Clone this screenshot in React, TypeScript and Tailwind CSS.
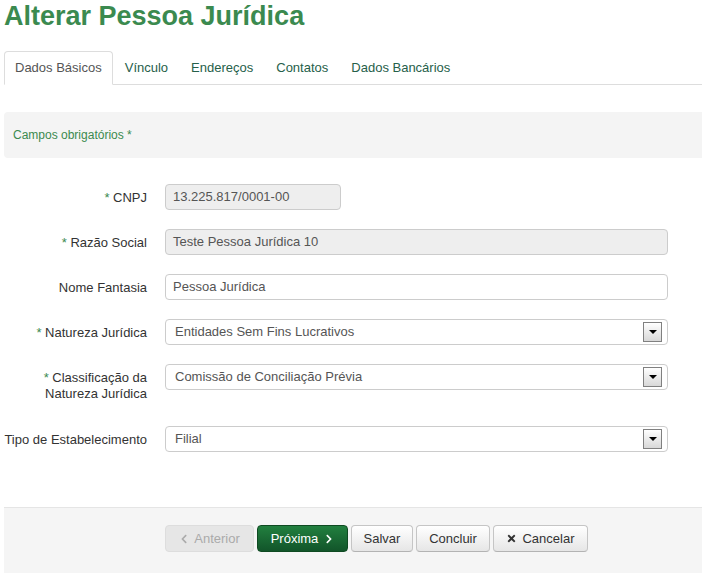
import { FaChevronLeft, FaChevronRight, FaTimes } from 'react-icons/fa';

const tabs = ['Dados Básicos', 'Vínculo', 'Endereços', 'Contatos', 'Dados Bancários'];

function Req() {
  return <span className="text-[#3b8a4f]">* </span>;
}

function SelectBox({ value }: { value: string }) {
  return (
    <div className="relative w-[503px] h-[26px] border border-[#ccc] rounded-[4px] bg-white flex items-center pl-[9px] text-[13px] text-[#555]">
      {value}
      <div className="absolute right-[5px] top-[2px] w-[19px] h-[20px] border border-[#808080] bg-gradient-to-b from-white to-[#d8d8d8] flex items-center justify-center">
        <div className="w-0 h-0 border-l-[4px] border-r-[4px] border-t-[4px] border-l-transparent border-r-transparent border-t-black" />
      </div>
    </div>
  );
}

function Row({ label, children, className = '' }: { label: React.ReactNode; children: React.ReactNode; className?: string }) {
  return (
    <div className={`flex items-start ${className}`}>
      <label className="w-[143px] shrink-0 text-right pt-[6px] leading-4 text-[13px] text-[#333]">{label}</label>
      <div className="ml-[18px]">{children}</div>
    </div>
  );
}

export default function App() {
  return (
    <div className="w-[702px] h-[573px] overflow-hidden bg-white pl-[4px] [font-family:'Liberation_Sans',Arial,sans-serif]">
      <h1 className="mt-[1px] leading-[30px] text-[27px] font-bold text-[#3b8a4f]">Alterar Pessoa Jurídica</h1>

      <div className="mt-[20px] flex border-b border-[#ddd] h-[34px]">
        {tabs.map((t, i) => (
          <div
            key={t}
            className={`h-[34px] px-[10px] mr-[1px] flex items-center text-[13px] rounded-t-[4px] border ${
              i === 0 ? 'bg-white border-[#ddd] border-b-white text-[#555]' : 'border-transparent text-[#26604a]'
            }`}
          >
            {t}
          </div>
        ))}
      </div>

      <div className="mt-[27px] h-[46px] bg-[#f4f4f4] rounded-l-[4px] flex items-center pl-[9px] text-[12px] text-[#3b8a4f]">
        Campos obrigatórios *
      </div>

      <div className="mt-[26px]">
        <Row label={<><Req />CNPJ</>} className="mb-[19px]">
          <div className="w-[176px] h-[26px] border border-[#ccc] rounded-[4px] bg-[#eee] flex items-center pl-[7px] text-[13px] text-[#555]">
            13.225.817/0001-00
          </div>
        </Row>
        <Row label={<><Req />Razão Social</>} className="mb-[19px]">
          <div className="w-[503px] h-[26px] border border-[#ccc] rounded-[4px] bg-[#eee] flex items-center pl-[7px] text-[13px] text-[#555]">
            Teste Pessoa Jurídica 10
          </div>
        </Row>
        <Row label="Nome Fantasia" className="mb-[19px]">
          <div className="w-[503px] h-[26px] border border-[#ccc] rounded-[4px] bg-white flex items-center pl-[7px] text-[13px] text-[#555]">
            Pessoa Jurídica
          </div>
        </Row>
        <Row label={<><Req />Natureza Jurídica</>} className="mb-[19px]">
          <SelectBox value="Entidades Sem Fins Lucrativos" />
        </Row>
        <Row label={<><Req />Classificação da<br />Natureza Jurídica</>} className="mb-[24px]">
          <SelectBox value="Comissão de Conciliação Prévia" />
        </Row>
        <Row label="Tipo de Estabelecimento">
          <SelectBox value="Filial" />
        </Row>
      </div>

      <div className="mt-[55px] border-t border-[#e5e5e5] bg-[#f5f5f5] h-[80px] pt-[17px] pl-[161px] flex gap-[3px] items-start text-[13px]">
        <button className="h-[27px] w-[89px] rounded-[4px] border border-[#ddd] bg-[#e6e6e6] text-[#aaa] flex items-center justify-center gap-[5px]">
          <FaChevronLeft className="w-[10px] h-[10px]" />
          Anterior
        </button>
        <button className="h-[27px] w-[91px] rounded-[4px] border border-[#0f4a22] bg-gradient-to-b from-[#22803f] to-[#12552a] text-white flex items-center justify-center gap-[6px]">
          Próxima
          <FaChevronRight className="w-[10px] h-[10px]" />
        </button>
        <button className="h-[27px] w-[62px] rounded-[4px] border border-[#c5c5c5] border-b-[#b3b3b3] bg-gradient-to-b from-white to-[#e6e6e6] text-[#333]">
          Salvar
        </button>
        <button className="h-[27px] w-[74px] rounded-[4px] border border-[#c5c5c5] border-b-[#b3b3b3] bg-gradient-to-b from-white to-[#e6e6e6] text-[#333]">
          Concluir
        </button>
        <button className="h-[27px] w-[95px] rounded-[4px] border border-[#c5c5c5] border-b-[#b3b3b3] bg-gradient-to-b from-white to-[#e6e6e6] text-[#333] flex items-center justify-center gap-[5px]">
          <FaTimes className="w-[11px] h-[11px]" />
          Cancelar
        </button>
      </div>
    </div>
  );
}
